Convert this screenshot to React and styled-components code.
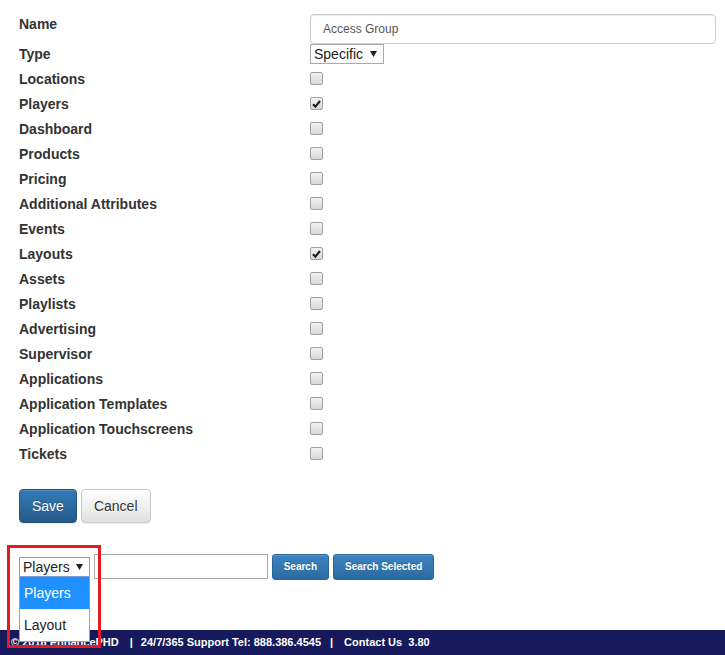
import React from "react";
import styled, { createGlobalStyle } from "styled-components";

const GlobalStyle = createGlobalStyle`
  html, body {
    margin: 0;
    padding: 0;
    background: #fff;
  }
  body {
    font-family: "Liberation Sans", Arial, sans-serif;
    color: #333;
  }
`;

const Page = styled.div`
  min-height: 100vh;
  display: flex;
  flex-direction: column;
`;

const Main = styled.main`
  padding: 14px 9px 0 19px;
`;

const Form = styled.div`
  display: flex;
  flex-direction: column;
`;

const Row = styled.div`
  display: flex;
  align-items: ${(p) => (p.$top ? "flex-start" : "center")};
  height: ${(p) => p.$h || 25}px;
`;

const Label = styled.label`
  width: 291px;
  flex-shrink: 0;
  font-size: 14px;
  font-weight: bold;
  line-height: 20px;
  color: #333;
`;

const TextInput = styled.input`
  box-sizing: border-box;
  width: 406px;
  height: 30px;
  padding: 0 12px;
  border: 1px solid #ccc;
  border-radius: 4px;
  box-shadow: inset 0 1px 1px rgba(0, 0, 0, 0.075);
  font-family: inherit;
  font-size: 12px;
  color: #555;
  outline: none;
`;

const Select = styled.div`
  position: relative;
  box-sizing: border-box;
  display: inline-flex;
  align-items: center;
  gap: ${(p) => p.$gap || 7}px;
  height: 20px;
  padding: 0 6px 0 3px;
  border: 1px solid ${(p) => (p.$focused ? "#7c9fd6" : "#a9a9a9")};
  background: #fff;
  font-size: 14px;
  color: #222;
  line-height: 18px;
`;

const Arrow = () => (
  <svg width="7" height="6" viewBox="0 0 7 6">
    <polygon points="0,0 7,0 3.5,6" fill="#222" />
  </svg>
);

const Box = styled.span`
  box-sizing: border-box;
  display: inline-flex;
  align-items: center;
  justify-content: center;
  width: 13px;
  height: 13px;
  border: 1px solid #a0a0a0;
  border-radius: 2px;
  background: linear-gradient(#f2f2f2, #d8d8d8);
`;

const Checkbox = ({ checked }) => (
  <Box>
    {checked && (
      <svg width="9" height="8" viewBox="0 0 9 8">
        <path d="M1 4.2 L3.4 6.6 L8 1" fill="none" stroke="#1a1a1a" strokeWidth="2.1" />
      </svg>
    )}
  </Box>
);

const Actions = styled.div`
  display: flex;
  gap: 4px;
  margin-top: 23px;
`;

const Button = styled.button`
  height: 34px;
  padding: 6px 12px;
  border-radius: 4px;
  font-family: inherit;
  font-size: 14px;
  line-height: 20px;
  cursor: pointer;
  box-shadow: inset 0 1px 0 rgba(255, 255, 255, 0.15), 0 1px 1px rgba(0, 0, 0, 0.075);
  ${(p) =>
    p.$primary
      ? `
    color: #fff;
    border: 1px solid #245580;
    background: linear-gradient(#337ab7, #265a88);
    text-shadow: 0 -1px 0 rgba(0, 0, 0, 0.2);
  `
      : `
    color: #333;
    border: 1px solid #ccc;
    background: linear-gradient(#fff, #e0e0e0);
    text-shadow: 0 1px 0 #fff;
  `}
`;

const SearchBar = styled.div`
  display: flex;
  align-items: center;
  gap: 4px;
  height: 27px;
  margin-top: 30px;
`;

const Picker = styled.div`
  position: relative;
  display: flex;
`;

const Highlight = styled.div`
  position: absolute;
  left: -12px;
  top: -12px;
  width: 94px;
  height: 103px;
  box-sizing: border-box;
  border: 3px solid #e31b23;
  z-index: 20;
  pointer-events: none;
`;

const Options = styled.ul`
  position: absolute;
  top: 20px;
  left: 0;
  width: 71px;
  box-sizing: border-box;
  margin: 0;
  padding: 0;
  list-style: none;
  border: 1px solid #a0a0a0;
  border-top: none;
  background: #fff;
  z-index: 10;
`;

const Option = styled.li`
  height: 32px;
  padding-left: 4px;
  font-size: 14px;
  line-height: 32px;
  color: ${(p) => (p.$active ? "#fff" : "#222")};
  background: ${(p) => (p.$active ? "#1e90ff" : "#fff")};
`;

const Query = styled.input`
  box-sizing: border-box;
  width: 174px;
  height: 25px;
  border: 1px solid #a9a9a9;
  outline: none;
  font-family: inherit;
`;

const SmallButton = styled.button`
  height: 26px;
  padding: 0 11px;
  border: 1px solid #2b669a;
  border-radius: 3px;
  background: linear-gradient(#3c84c1, #2c6aa0);
  box-shadow: inset 0 1px 0 rgba(255, 255, 255, 0.15);
  color: #fff;
  font-family: inherit;
  font-size: 10px;
  font-weight: bold;
  text-shadow: 0 -1px 0 rgba(0, 0, 0, 0.2);
  cursor: pointer;
`;

const Footer = styled.footer`
  margin-top: auto;
  height: 25px;
  padding-left: 11px;
  background: #161a5c;
  color: #fff;
  font-size: 11px;
  font-weight: bold;
  line-height: 25px;
  white-space: pre;
`;

const Sep = styled.span`
  margin: 0 ${(p) => p.$r || 8}px 0 ${(p) => p.$l || 11}px;
`;

const permissions = [
  ["Locations", false],
  ["Players", true],
  ["Dashboard", false],
  ["Products", false],
  ["Pricing", false],
  ["Additional Attributes", false],
  ["Events", false],
  ["Layouts", true],
  ["Assets", false],
  ["Playlists", false],
  ["Advertising", false],
  ["Supervisor", false],
  ["Applications", false],
  ["Application Templates", false],
  ["Application Touchscreens", false],
  ["Tickets", false],
];

const App = () => {
  return (
    <Page>
      <GlobalStyle />
      <Main>
        <Form>
          <Row $h={30} $top>
            <Label>Name</Label>
            <TextInput defaultValue="Access Group" />
          </Row>
          <Row $h={22} $top>
            <Label>Type</Label>
            <Select>
              Specific <Arrow />
            </Select>
          </Row>
          {permissions.map(([name, checked]) => (
            <Row key={name}>
              <Label>{name}</Label>
              <Checkbox checked={checked} />
            </Row>
          ))}
        </Form>

        <Actions>
          <Button $primary>Save</Button>
          <Button>Cancel</Button>
        </Actions>

        <SearchBar>
          <Picker>
            <Select $focused $gap={6}>
              Players <Arrow />
            </Select>
            <Options>
              <Option $active>Players</Option>
              <Option>Layout</Option>
            </Options>
            <Highlight />
          </Picker>
          <Query />
          <SmallButton>Search</SmallButton>
          <SmallButton>Search Selected</SmallButton>
        </SearchBar>
      </Main>

      <Footer>
        © 2018 EnhancePHD<Sep>|</Sep>24/7/365 Support Tel: 888.386.4545
        <Sep $l={9} $r={11}>|</Sep>Contact Us  3.80
      </Footer>
    </Page>
  );
};

export default App;
